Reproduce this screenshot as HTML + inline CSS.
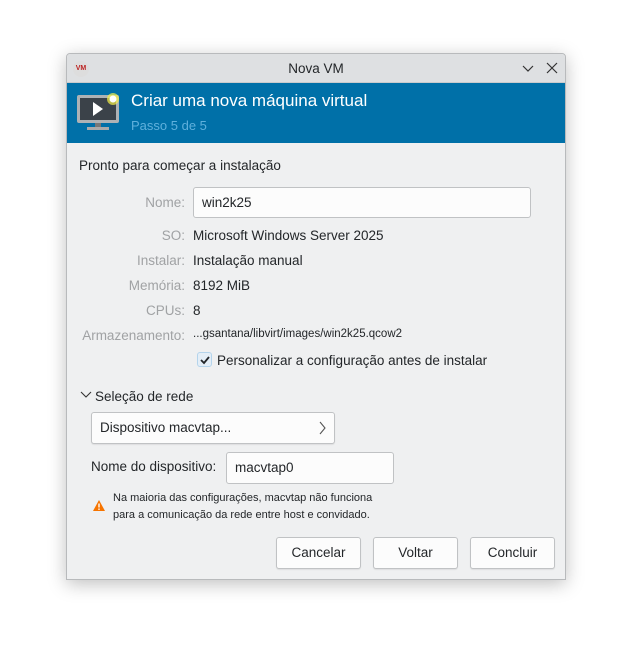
<!DOCTYPE html>
<html><head><meta charset="utf-8"><style>
*{box-sizing:border-box;margin:0;padding:0}
body{width:632px;height:659px;background:#fff;font-family:"Liberation Sans","DejaVu Sans",sans-serif;font-size:13.5px;color:#232629;position:relative;overflow:hidden}
.win{position:absolute;left:66px;top:53px;width:500px;height:527px;background:#eff0f1;border:1px solid #b8babc;box-shadow:0 4px 18px rgba(0,0,0,.25);border-radius:4px 4px 0 0}
.title{position:absolute;left:0;top:0;width:498px;height:29px;background:#dee0e2;border-bottom:1px solid #c9cbcd;text-align:center;line-height:29px;font-size:13.5px;border-radius:4px 4px 0 0}
.hdr{position:absolute;left:0;top:29px;width:498px;height:60px;background:#0070a8}
.a{position:absolute;white-space:nowrap}
.lbl{position:absolute;right:380px;color:#a0a2a4;white-space:nowrap}
.val{position:absolute;left:126px;white-space:nowrap}
.inp{position:absolute;background:#fcfcfc;border:1px solid #c0c2c4;border-radius:3px;padding-left:8px}
.btn{position:absolute;top:483px;width:85px;height:32px;background:#fcfcfc;border:1px solid #c0c2c4;border-radius:3px;text-align:center;line-height:30px;box-shadow:0 1px 1px rgba(0,0,0,.08)}
</style></head><body>
<div class="win">
<div class="title">Nova VM
<div class="a" style="left:6px;top:7px;width:16px;height:16px;border-radius:50%;background:#ddd;font-size:7px;line-height:16px;color:#b22;font-weight:bold">VM</div>
<svg class="a" style="left:455px;top:10px" width="12" height="10"><path d="M1 2l5 5 5-5" fill="none" stroke="#333" stroke-width="1.2"/></svg>
<svg class="a" style="left:479px;top:8px" width="12" height="12"><path d="M1 1l10 10M11 1L1 11" stroke="#333" stroke-width="1.2"/></svg>
</div>
<div class="hdr">
<svg class="a" style="left:8px;top:8px" width="48" height="42"><rect x="2" y="4" width="42" height="28" rx="2" fill="#aeb2b5"/><rect x="5" y="7" width="36" height="22" fill="#3b4249"/><path d="M18 11l10 7-10 7z" fill="#fff"/><rect x="20" y="32" width="6" height="4" fill="#777"/><rect x="12" y="36" width="22" height="3" fill="#aaa"/><circle cx="38" cy="8" r="6" fill="#f6f24a" opacity=".7"/><circle cx="38" cy="8" r="3.5" fill="#fff"/></svg>
<div class="a" style="left:64px;top:8px;color:#fff;font-size:17px">Criar uma nova máquina virtual</div>
<div class="a" style="left:64px;top:35px;color:#5fb0dc;font-size:13px">Passo 5 de 5</div>
</div>
<div class="a" style="left:12px;top:104px">Pronto para começar a instalação</div>
<div class="lbl" style="top:141px">Nome:</div>
<div class="inp" style="left:126px;top:133px;width:338px;height:31px;line-height:29px">win2k25</div>
<div class="lbl" style="top:174px">SO:</div><div class="val" style="top:174px">Microsoft Windows Server 2025</div>
<div class="lbl" style="top:199px">Instalar:</div><div class="val" style="top:199px">Instalação manual</div>
<div class="lbl" style="top:224px">Memória:</div><div class="val" style="top:224px">8192 MiB</div>
<div class="lbl" style="top:249px">CPUs:</div><div class="val" style="top:249px">8</div>
<div class="lbl" style="top:274px">Armazenamento:</div><div class="val" style="top:274px;font-size:11.5px">...gsantana/libvirt/images/win2k25.qcow2</div>
<div class="a" style="left:130px;top:298px;width:15px;height:15px;border:1px solid #b4d4ec;background:#e4eef7;border-radius:3px"><svg width="13" height="13"><path d="M3 7l3 3 5-6" fill="none" stroke="#232629" stroke-width="1.8"/></svg></div>
<div class="a" style="left:150px;top:299px">Personalizar a configuração antes de instalar</div>
<svg class="a" style="left:13px;top:337px" width="12" height="8"><path d="M1 1l5 5 5-5" fill="none" stroke="#333" stroke-width="1.1"/></svg>
<div class="a" style="left:28px;top:335px">Seleção de rede</div>
<div class="inp" style="left:24px;top:358px;width:244px;height:32px;line-height:30px;box-shadow:0 1px 1px rgba(0,0,0,.08)">Dispositivo macvtap...</div>
<svg class="a" style="left:252px;top:367px" width="8" height="14"><path d="M1 1l5 6-5 6" fill="none" stroke="#555" stroke-width="1.1"/></svg>
<div class="a" style="left:24px;top:405px">Nome do dispositivo:</div>
<div class="inp" style="left:159px;top:398px;width:168px;height:32px;line-height:30px">macvtap0</div>
<svg class="a" style="left:25px;top:445px" width="14" height="13"><path d="M7 1L13 12H1z" fill="#f67400"/><rect x="6.3" y="4.5" width="1.4" height="4" fill="#fff"/><rect x="6.3" y="9.5" width="1.4" height="1.4" fill="#fff"/></svg>
<div class="a" style="left:46px;top:436px;font-size:11px;line-height:17px">Na maioria das configurações, macvtap não funciona<br>para a comunicação da rede entre host e convidado.</div>
<div class="btn" style="left:209px">Cancelar</div>
<div class="btn" style="left:306px">Voltar</div>
<div class="btn" style="left:403px">Concluir</div>
</div>
</body></html>
